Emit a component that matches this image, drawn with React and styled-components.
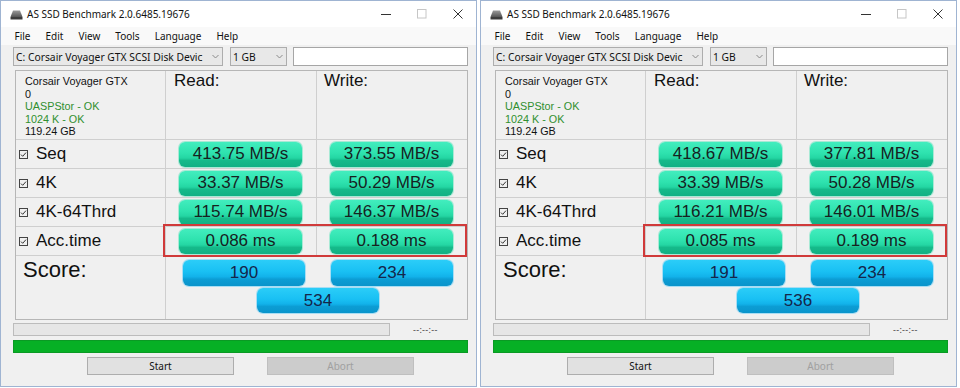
import React from "react";
import styled, { createGlobalStyle } from "styled-components";

const GlobalStyle = createGlobalStyle`
	html, body {
		margin: 0;
		padding: 0;
		background: #fff;
	}
	* {
		box-sizing: border-box;
	}
`;

const ui = `"Noto Sans", "Open Sans", sans-serif`;
const arial = `"Liberation Sans", Arial, sans-serif`;

const Page = styled.div`
	width: 960px;
	height: 388px;
	display: flex;
	gap: 3px;
	background: #fff;
`;

const Window = styled.div`
	width: 477px;
	height: 387px;
	border: 1px solid #9fb4d2;
	background: #f0f0f0;
	display: flex;
	flex-direction: column;
	font-family: ${ui};
`;

const TitleBar = styled.div`
	height: 26px;
	background: #fff;
	display: flex;
	align-items: center;
	padding-left: 9px;
`;

const Title = styled.span`
	margin-left: 4px;
	font-size: 10px;
	color: #111;
	flex: 1;
`;

const Caption = styled.div`
	width: 36px;
	height: 26px;
	display: flex;
	align-items: center;
	justify-content: center;
`;

const MenuBar = styled.div`
	height: 18px;
	background: #f9f9f9;
	display: flex;
	align-items: center;
	padding-left: 6px;
`;

const MenuItem = styled.span`
	padding: 0 7.5px;
	font-size: 10px;
	color: #111;
`;

const ToolRow = styled.div`
	display: flex;
	align-items: center;
	margin-top: 2px;
	padding-left: 12px;
	height: 19px;
`;

const Combo = styled.div`
	width: ${(p) => p.$w}px;
	height: 19px;
	margin-right: ${(p) => p.$gap || 0}px;
	border: 1px solid #adadad;
	background: #e8e8e8;
	display: flex;
	align-items: center;
	padding-left: 2px;
	font-size: 10.3px;
	color: #111;
`;

const ComboText = styled.span`
	flex: 1;
	white-space: nowrap;
	overflow: hidden;
`;

const ComboArrow = styled.span`
	width: 14px;
	display: flex;
	justify-content: center;
`;

const TextField = styled.div`
	width: 175px;
	height: 19px;
	border: 1px solid #a6a6a6;
	background: #fff;
`;

const Table = styled.div`
	margin: 4px 0 0 14px;
	width: 453px;
	border: 1px solid #b6b6b6;
	display: flex;
	flex-direction: column;
`;

const Row = styled.div`
	position: relative;
	height: ${(p) => p.$h}px;
	display: grid;
	grid-template-columns: 150px 151px 150px;
	border-bottom: ${(p) => (p.$last ? "none" : "1px solid #cfcfcf")};
`;

const ScoreRow = styled.div`
	height: 63px;
	display: grid;
	grid-template-columns: 150px 301px;
`;

const Cell = styled.div`
	border-right: ${(p) => (p.$end ? "none" : "1px solid #cfcfcf")};
	display: flex;
	align-items: ${(p) => (p.$top ? "flex-start" : "center")};
	padding-left: ${(p) => p.$pl || 0}px;
`;

const Info = styled.div`
	padding: 4px 0 0 9px;
	border-right: 1px solid #cfcfcf;
	font-family: ${arial};
	font-size: 10.8px;
	line-height: 12.5px;
	color: #111;
`;

const InfoLine = styled.div`
	color: ${(p) => (p.$ok ? "#2f8f2f" : "#111")};
`;

const Heading = styled.div`
	font-family: ${arial};
	font-size: 17px;
	line-height: 20px;
	color: #111;
`;

const Label = styled.span`
	margin-left: 8px;
	font-family: ${arial};
	font-size: 17px;
	color: #111;
`;

const Badge = styled.div`
	width: 123px;
	height: 25px;
	border-radius: 6px;
	display: flex;
	align-items: center;
	justify-content: center;
	font-family: ${arial};
	font-size: 17px;
	color: #16221f;
	background: linear-gradient(
		to bottom,
		#42edbe 0%,
		#2ee2ae 45%,
		#24d6a3 64%,
		#15ba8a 74%,
		#11b084 100%
	);
	box-shadow: 0 0 0 1px rgba(110, 228, 192, 0.55);
`;

const ScoreBadge = styled(Badge)`
	width: 122px;
	height: ${(p) => p.$h}px;
	color: #15264a;
	background: linear-gradient(
		to bottom,
		#2bcdf8 0%,
		#19c0f3 45%,
		#12b2ea 64%,
		#0c9dd4 74%,
		#0a94cb 100%
	);
	box-shadow: 0 0 0 1px rgba(110, 205, 245, 0.55);
	grid-column: ${(p) => (p.$wide ? "1 / 3" : "auto")};
	justify-self: center;
`;

const ScoreLabel = styled.div`
	padding: 2px 0 0 7px;
	border-right: 1px solid #cfcfcf;
	font-family: ${arial};
	font-size: 22px;
	line-height: 24px;
	color: #111;
`;

const ScoreGrid = styled.div`
	display: grid;
	grid-template-columns: 122px 122px;
	column-gap: 26px;
	row-gap: 2px;
	align-content: start;
	padding: 4px 0 0 17px;
`;

const Highlight = styled.div`
	position: absolute;
	top: -3px;
	bottom: -2px;
	left: 147px;
	right: 0;
	border: 2px solid #d03a3a;
	pointer-events: none;
`;

const ProgressRow = styled.div`
	display: flex;
	align-items: center;
	margin: 3px 0 0 12px;
	height: 13px;
`;

const Progress = styled.div`
	width: 377px;
	height: 13px;
	border: 1px solid #bcbcbc;
	background: #e6e6e6;
`;

const Timer = styled.span`
	margin-left: 23px;
	font-size: 9px;
	color: #444;
	letter-spacing: 0.3px;
`;

const GreenBar = styled.div`
	margin: 4px 0 0 12px;
	width: 455px;
	height: 13px;
	background: #06b025;
	border: 1px solid #0a9a24;
`;

const Buttons = styled.div`
	display: flex;
	gap: 33px;
	margin: 4px 0 0 86px;
`;

const Button = styled.div`
	width: 147px;
	height: 18px;
	display: flex;
	align-items: center;
	justify-content: center;
	font-size: 10px;
	border: 1px solid ${(p) => (p.$disabled ? "#bfbfbf" : "#adadad")};
	background: ${(p) => (p.$disabled ? "#cccccc" : "#e1e1e1")};
	color: ${(p) => (p.$disabled ? "#a0a0a0" : "#111")};
`;

const DiskIcon = () => (
	<svg width="13" height="11" viewBox="0 0 13 11">
		<defs>
			<linearGradient id="dk" x1="0" y1="0" x2="0" y2="1">
				<stop offset="0" stopColor="#9a9a9a" />
				<stop offset="1" stopColor="#555" />
			</linearGradient>
		</defs>
		<path d="M3 1.5 H10 L12.5 8 H0.5 Z" fill="url(#dk)" />
		<rect x="0.5" y="8" width="12" height="2.5" fill="#3c3c3c" />
	</svg>
);

const Minimize = () => (
	<svg width="10" height="10" viewBox="0 0 10 10">
		<path d="M0 5.5 H10" stroke="#333" strokeWidth="1" />
	</svg>
);

const Maximize = () => (
	<svg width="10" height="10" viewBox="0 0 10 10">
		<rect x="0.5" y="0.5" width="8.5" height="8.5" fill="none" stroke="#c6c6c6" />
	</svg>
);

const Close = () => (
	<svg width="10" height="10" viewBox="0 0 10 10">
		<path d="M0.5 0.5 L9.5 9.5 M9.5 0.5 L0.5 9.5" stroke="#333" strokeWidth="1" />
	</svg>
);

const Chevron = () => (
	<svg width="7" height="5" viewBox="0 0 7 5">
		<path d="M0.5 1 L3.5 4 L6.5 1" fill="none" stroke="#8a8a8a" strokeWidth="1" />
	</svg>
);

const Check = () => (
	<svg width="9" height="9" viewBox="0 0 9 9">
		<rect x="0.5" y="0.5" width="8" height="8" fill="none" stroke="#444" />
		<path d="M2 4.6 L3.7 6.3 L7 2.6" fill="none" stroke="#333" strokeWidth="1" />
	</svg>
);

const menus = ["File", "Edit", "View", "Tools", "Language", "Help"];
const tests = ["Seq", "4K", "4K-64Thrd", "Acc.time"];

const runs = [
	{
		read: ["413.75 MB/s", "33.37 MB/s", "115.74 MB/s", "0.086 ms"],
		write: ["373.55 MB/s", "50.29 MB/s", "146.37 MB/s", "0.188 ms"],
		score: ["190", "234", "534"],
	},
	{
		read: ["418.67 MB/s", "33.39 MB/s", "116.21 MB/s", "0.085 ms"],
		write: ["377.81 MB/s", "50.28 MB/s", "146.01 MB/s", "0.189 ms"],
		score: ["191", "234", "536"],
	},
];

const Benchmark = ({ run }) => (
	<Window>
		<TitleBar>
			<DiskIcon />
			<Title>AS SSD Benchmark 2.0.6485.19676</Title>
			<Caption>
				<Minimize />
			</Caption>
			<Caption>
				<Maximize />
			</Caption>
			<Caption>
				<Close />
			</Caption>
		</TitleBar>
		<MenuBar>
			{menus.map((m) => (
				<MenuItem key={m}>{m}</MenuItem>
			))}
		</MenuBar>
		<ToolRow>
			<Combo $w={210} $gap={7}>
				<ComboText>C: Corsair Voyager GTX SCSI Disk Devic</ComboText>
				<ComboArrow>
					<Chevron />
				</ComboArrow>
			</Combo>
			<Combo $w={57} $gap={6}>
				<ComboText>1 GB</ComboText>
				<ComboArrow>
					<Chevron />
				</ComboArrow>
			</Combo>
			<TextField />
		</ToolRow>
		<Table>
			<Row $h={69}>
				<Info>
					<InfoLine>Corsair Voyager GTX</InfoLine>
					<InfoLine>0</InfoLine>
					<InfoLine $ok>UASPStor - OK</InfoLine>
					<InfoLine $ok>1024 K - OK</InfoLine>
					<InfoLine>119.24 GB</InfoLine>
				</Info>
				<Cell $top $pl={8}>
					<Heading>Read:</Heading>
				</Cell>
				<Cell $top $end $pl={7}>
					<Heading>Write:</Heading>
				</Cell>
			</Row>
			{tests.map((t, i) => (
				<Row key={t} $h={29}>
					<Cell $pl={3}>
						<Check />
						<Label>{t}</Label>
					</Cell>
					<Cell $pl={13}>
						<Badge>{run.read[i]}</Badge>
					</Cell>
					<Cell $end $pl={13}>
						<Badge>{run.write[i]}</Badge>
					</Cell>
					{t === "Acc.time" && <Highlight />}
				</Row>
			))}
			<ScoreRow>
				<ScoreLabel>Score:</ScoreLabel>
				<ScoreGrid>
					<ScoreBadge $h={26}>{run.score[0]}</ScoreBadge>
					<ScoreBadge $h={26}>{run.score[1]}</ScoreBadge>
					<ScoreBadge $h={25} $wide>
						{run.score[2]}
					</ScoreBadge>
				</ScoreGrid>
			</ScoreRow>
		</Table>
		<ProgressRow>
			<Progress />
			<Timer>--:--:--</Timer>
		</ProgressRow>
		<GreenBar />
		<Buttons>
			<Button>Start</Button>
			<Button $disabled>Abort</Button>
		</Buttons>
	</Window>
);

const App = () => (
	<>
		<GlobalStyle />
		<Page>
			{runs.map((run, i) => (
				<Benchmark key={i} run={run} />
			))}
		</Page>
	</>
);

export default App;
